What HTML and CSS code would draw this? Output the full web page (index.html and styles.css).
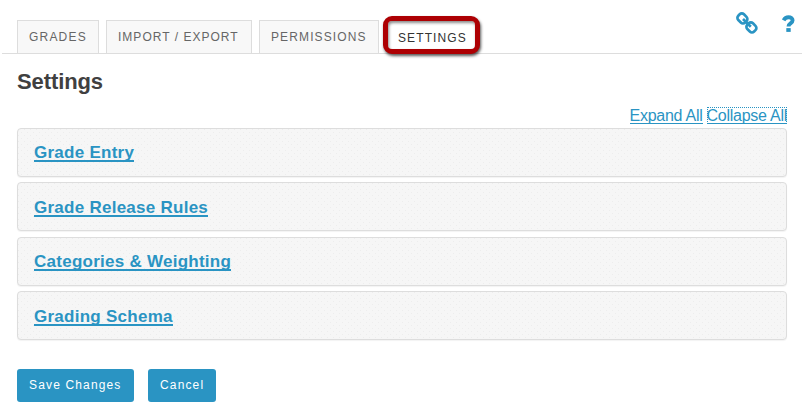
FILE: index.html
```html
<!DOCTYPE html>
<html lang="en">
<head>
<meta charset="utf-8">
<title>Settings</title>
<link rel="stylesheet" href="styles.css">
</head>
<body>
<header class="toolbar">
  <nav class="tabs">
    <a class="tab tab-grades">Grades</a>
    <a class="tab tab-import">Import / Export</a>
    <a class="tab tab-permissions">Permissions</a>
    <a class="tab-current">Settings</a>
  </nav>
  <div class="tools">
    <svg class="link-icon" width="22" height="22" viewBox="0 0 22 22" fill="none" stroke="currentColor" stroke-width="2.7">
      <rect x="-4.8" y="-4" width="9.6" height="8" rx="3" transform="translate(6.4 6.4) rotate(45)"/>
      <rect x="-4.8" y="-4" width="9.6" height="8" rx="3" transform="translate(15.4 15.4) rotate(45)"/>
      <path d="M7 7l7.8 7.8"/>
    </svg>
    <svg class="help-icon" width="13" height="18" viewBox="0 0 13 18" fill="none" stroke="currentColor">
      <path d="M1.6 5.3C2.7 3 4.3 2.2 6.5 2.2c2.4 0 4.1 1.2 4.1 3 0 3.3-4.1 3-4.1 6.2" stroke-width="3.9"/>
      <path d="M4.3 15h4.4" stroke-width="3.8"/>
    </svg>
  </div>
</header>
<main class="content">
  <h1>Settings</h1>
  <div class="expanders"><a>Expand All</a><a class="focused">Collapse All</a></div>
  <div class="panels">
    <section class="panel"><a>Grade Entry</a></section>
    <section class="panel"><a>Grade Release Rules</a></section>
    <section class="panel"><a>Categories &amp; Weighting</a></section>
    <section class="panel"><a>Grading Schema</a></section>
  </div>
  <div class="actions">
    <button class="save">Save Changes</button>
    <button class="cancel">Cancel</button>
  </div>
</main>
</body>
</html>
```
FILE: styles.css
```css
* { box-sizing: border-box; }
body {
  margin: 0;
  height: 413px;
  overflow: hidden;
  background: #fff;
  color: #404040;
  font-family: "Liberation Sans", Arial, sans-serif;
}
.toolbar {
  display: flex;
  justify-content: space-between;
  height: 54px;
  margin: 0 2px;
  padding-left: 15px;
  border-bottom: 1px solid #ddd;
}
.tabs { display: flex; align-items: flex-start; padding-top: 20px; }
.tab {
  height: 33px;
  margin-right: 7px;
  padding-left: 11px;
  border: 1px solid #ddd;
  border-bottom: 0;
  background: #f8f8f8;
  color: #666;
  font-size: 12px;
  line-height: 32px;
  letter-spacing: 1.2px;
  text-transform: uppercase;
  white-space: nowrap;
}
.tab-grades { width: 82px; }
.tab-import { width: 146px; letter-spacing: 1.02px; }
.tab-permissions { width: 120px; letter-spacing: 1.12px; }
.tab-current {
  width: 97px;
  height: 38px;
  margin: -4px 0 0 -3px;
  padding-left: 10px;
  border: 5px solid #ad0003;
  border-radius: 9px;
  background: #fff;
  box-shadow: 1px 2px 3px rgba(0,0,0,.65), inset 1px 2px 3px rgba(0,0,0,.45);
  color: #333;
  font-size: 12px;
  line-height: 34px;
  letter-spacing: 1.1px;
  text-transform: uppercase;
}
.tools { display: flex; color: #2a94c3; }
.link-icon { margin: 12px 24px 0 0; }
.help-icon { margin: 15px 7px 0 0; }
.content { padding: 0 17px; }
h1 {
  height: 28px;
  margin: 14px 0 0;
  font-size: 22px;
  line-height: 28px;
  letter-spacing: -.1px;
}
.expanders {
  display: flex;
  justify-content: flex-end;
  gap: 4px;
  height: 17px;
  margin-top: 11px;
  color: #2a94c3;
  font-size: 16px;
  line-height: 17px;
  letter-spacing: -.26px;
}
.expanders a { height: 17px; border-bottom: 1px solid #2a94c3; }
.focused { outline: 1px dotted #2a94c3; outline-offset: -1px; }
.panels { display: grid; gap: 5.4px; margin-top: 4px; }
.panel {
  height: 49px;
  padding: 15px 0 0 16px;
  border: 1px solid #ddd;
  border-radius: 4px;
  background-color: #f6f6f6;
  background-image:
    radial-gradient(circle at .5px .5px, #ededed .6px, transparent .7px),
    radial-gradient(circle at .5px .5px, #ededed .6px, transparent .7px);
  background-size: 6px 6px;
  background-position: 0 0, 3px 3px;
  box-shadow: 0 1px 1px rgba(0,0,0,.05);
}
.panel:nth-child(even) { padding-top: 16px; }
.panel a {
  display: inline-block;
  height: 18px;
  border-bottom: 2px solid #2a94c3;
  color: #2a94c3;
  font-size: 17px;
  font-weight: bold;
  line-height: 18px;
  letter-spacing: .26px;
}
.actions { display: flex; gap: 14px; margin-top: 29px; }
button {
  height: 33px;
  padding: 0 0 2px 12px;
  border: 0;
  border-radius: 3px;
  background: #2a94c3;
  color: #fff;
  font: 12px "Liberation Sans", Arial, sans-serif;
  letter-spacing: 1.15px;
  text-align: left;
}
.save { width: 117px; }
.cancel { width: 68px; }
```
